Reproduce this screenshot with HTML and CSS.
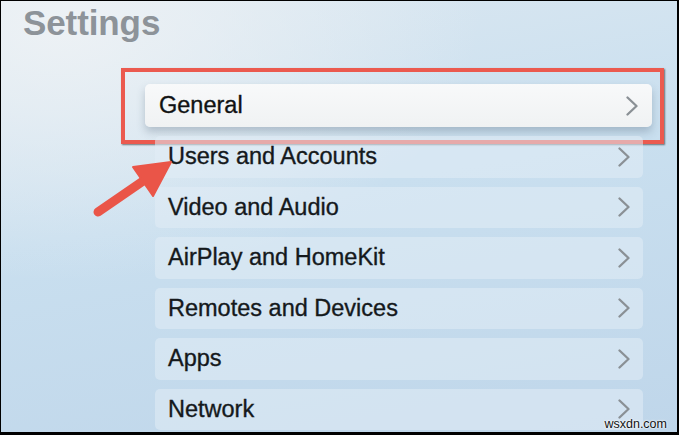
FILE: index.html
```html
<!DOCTYPE html>
<html>
<head>
<meta charset="utf-8">
<link rel="stylesheet" href="styles.css">
</head>
<body>
<div class="screen">
  <h1 class="title">Settings</h1>
  <ul class="menu">
    <li class="item focused">
      <span>General</span>
      <svg class="chev" viewBox="0 0 12 20"><path d="M1.5 1.5 L10.5 10 L1.5 18.5"/></svg>
      <div class="callout"></div>
    </li>
    <li class="item"><span>Users and Accounts</span><svg class="chev" viewBox="0 0 12 20"><path d="M1.5 1.5 L10.5 10 L1.5 18.5"/></svg></li>
    <li class="item"><span>Video and Audio</span><svg class="chev" viewBox="0 0 12 20"><path d="M1.5 1.5 L10.5 10 L1.5 18.5"/></svg></li>
    <li class="item"><span>AirPlay and HomeKit</span><svg class="chev" viewBox="0 0 12 20"><path d="M1.5 1.5 L10.5 10 L1.5 18.5"/></svg></li>
    <li class="item"><span>Remotes and Devices</span><svg class="chev" viewBox="0 0 12 20"><path d="M1.5 1.5 L10.5 10 L1.5 18.5"/></svg></li>
    <li class="item"><span>Apps</span><svg class="chev" viewBox="0 0 12 20"><path d="M1.5 1.5 L10.5 10 L1.5 18.5"/></svg></li>
    <li class="item"><span>Network</span><svg class="chev" viewBox="0 0 12 20"><path d="M1.5 1.5 L10.5 10 L1.5 18.5"/></svg></li>
  </ul>
  <svg class="arrow" viewBox="0 0 679 435" width="679" height="435">
    <line x1="98" y1="212" x2="146" y2="179" />
    <polygon points="171,162 153,196 133,167" />
  </svg>
  <div class="watermark">wsxdn.com</div>
</div>
</body>
</html>
```

FILE: styles.css
```css
* { box-sizing: border-box; }
html, body { margin: 0; padding: 0; background: #000; }
.screen {
  position: relative;
  width: 679px;
  height: 435px;
  overflow: hidden;
  border-style: solid;
  border-color: #000;
  border-width: 1px 2px 3px 1px;
  background:
    radial-gradient(ellipse 420px 260px at 60px 20px, rgba(238,242,245,0.95), rgba(238,242,245,0) 100%),
    linear-gradient(170deg, #dce8f1 0%, #c9dfef 45%, #bfd6ea 100%);
  font-family: "Liberation Sans", Arial, sans-serif;
}
.title {
  margin: 2px 0 0 22px;
  font-size: 35px;
  line-height: 40px;
  font-weight: 700;
  color: #8d9399;
  letter-spacing: -0.1px;
}
.menu {
  list-style: none;
  margin: 41px 0 0 154px;
  padding: 0;
  width: 488px;
  display: flex;
  flex-direction: column;
  gap: 9px;
}
.item {
  position: relative;
  height: 41.5px;
  display: flex;
  align-items: center;
  justify-content: space-between;
  padding: 0 13px 0 13px;
  border-radius: 5px;
  background: rgba(225, 236, 245, 0.55);
  font-size: 23.5px;
  color: #15191c;
  -webkit-text-stroke: 0.35px #15191c;
}
.item.focused {
  height: 43px;
  margin: 0 -9px 0 -10px;
  padding: 0 14px 0 14px;
  background: linear-gradient(180deg, #f8f9fa 0%, #f0f2f3 100%);
  box-shadow: 0 5px 9px rgba(60, 80, 100, 0.28);
  color: #111;
}
.chev {
  width: 12px;
  height: 20px;
  fill: none;
  stroke: #8a9095;
  stroke-width: 2.3;
  stroke-linecap: round;
  stroke-linejoin: round;
}
.callout {
  position: absolute;
  left: -24px;
  right: -12px;
  top: -16px;
  bottom: -17px;
  border: 4px solid #eb5a4f;
  box-shadow: 1px 1px 1.5px rgba(40, 40, 40, 0.6);
}
.arrow {
  position: absolute;
  left: -1px;
  top: -1px;
  pointer-events: none;
}
.arrow line {
  stroke: #ea5548;
  stroke-width: 9;
  stroke-linecap: round;
}
.arrow polygon {
  fill: #ea5548;
  stroke: #ea5548;
  stroke-width: 2;
  stroke-linejoin: round;
}
.watermark {
  position: absolute;
  right: 10px;
  bottom: 1px;
  font-family: "Liberation Sans", Arial, sans-serif;
  font-size: 12.5px;
  color: #111;
  text-shadow: 0 0 2px #fff, 0 0 2px #fff;
}
```
